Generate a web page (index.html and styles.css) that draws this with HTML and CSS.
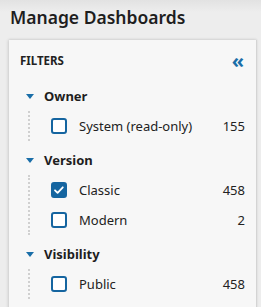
FILE: index.html
```html
<!DOCTYPE html>
<html lang="en">
<head>
  <meta charset="UTF-8" />
  <title>Manage Dashboards</title>
  <link rel="stylesheet" href="styles.css">
</head>
<body>
  <h1 class="page-title">Manage Dashboards</h1>
  <div class="panel">
    <div class="panel-head">
      <span class="panel-title">FILTERS</span>
      <button class="collapse" type="button">&laquo;</button>
    </div>

    <div class="group">
      <div class="group-head"><span class="caret"></span>Owner</div>
      <ul class="options">
        <li><span class="box"></span><span class="label">System (read-only)</span><span class="count">155</span></li>
      </ul>
    </div>

    <div class="group">
      <div class="group-head"><span class="caret"></span>Version</div>
      <ul class="options">
        <li><span class="box checked"><svg viewBox="0 0 12 12" width="12" height="12"><path d="M2 6.3l2.6 2.6 5.2-5.6" fill="none" stroke="#fff" stroke-width="1.8" stroke-linecap="round" stroke-linejoin="round"/></svg></span><span class="label">Classic</span><span class="count">458</span></li>
        <li><span class="box"></span><span class="label">Modern</span><span class="count">2</span></li>
      </ul>
    </div>

    <div class="group">
      <div class="group-head"><span class="caret"></span>Visibility</div>
      <ul class="options">
        <li><span class="box"></span><span class="label">Public</span><span class="count">458</span></li>
      </ul>
    </div>
  </div>
</body>
</html>
```

FILE: styles.css
```css
body {
  margin: 0;
  font-family: 'Noto Sans', sans-serif;
  background: linear-gradient(#e2e2e2, #ededed 12px, #ededed);
  color: #222;
  height: 307px;
  overflow: hidden;
}
.page-title {
  margin: 0;
  padding: 5px 0 0 10px;
  height: 35px;
  font-size: 17.5px;
  font-weight: 600;
  line-height: 24px;
  color: #1e1e1e;
}
.panel {
  margin-left: 9px;
  width: 247px;
  height: 280px;
  background: #f7f7f7;
  border-right: 1px solid #d4d4d4;
  box-shadow: -1px 0 3px rgba(0,0,0,0.12), 0 -1px 2px rgba(0,0,0,0.06);
}
.panel-head {
  display: flex;
  align-items: center;
  justify-content: space-between;
  padding: 0 12px 0 11px;
  height: 41px;
}
.panel-title {
  font-size: 11.5px;
  font-weight: 700;
  color: #222;
}
.collapse {
  background: none;
  border: none;
  padding: 0;
  color: #1a6ea8;
  font-family: 'Noto Sans', sans-serif;
  font-size: 20px;
  font-weight: 700;
  line-height: 1;
  cursor: pointer;
}
.group-head {
  display: flex;
  align-items: center;
  height: 30px;
  padding-left: 17px;
  font-size: 13px;
  font-weight: 700;
  color: #1e1e1e;
}
.caret {
  width: 0;
  height: 0;
  border-left: 4px solid transparent;
  border-right: 4px solid transparent;
  border-top: 5px solid #1a6ea8;
  margin-right: 10px;
}
.options {
  list-style: none;
  margin: 0 0 4px 19px;
  padding: 0;
  border-left: 2px dotted #d0d0d0;
}
.options li {
  display: flex;
  align-items: center;
  height: 30px;
  padding-left: 21px;
  font-size: 13px;
  color: #222;
}
.box {
  box-sizing: border-box;
  width: 16px;
  height: 16px;
  border: 2px solid #1565a0;
  border-radius: 3px;
  background: #fff;
  margin-right: 12px;
  flex-shrink: 0;
}
.box.checked {
  background: #1565a0;
  display: flex;
  align-items: center;
  justify-content: center;
}
.box.checked svg {
  flex-shrink: 0;
}
.label {
  flex: 1;
}
.count {
  margin-right: 11px;
}
```
